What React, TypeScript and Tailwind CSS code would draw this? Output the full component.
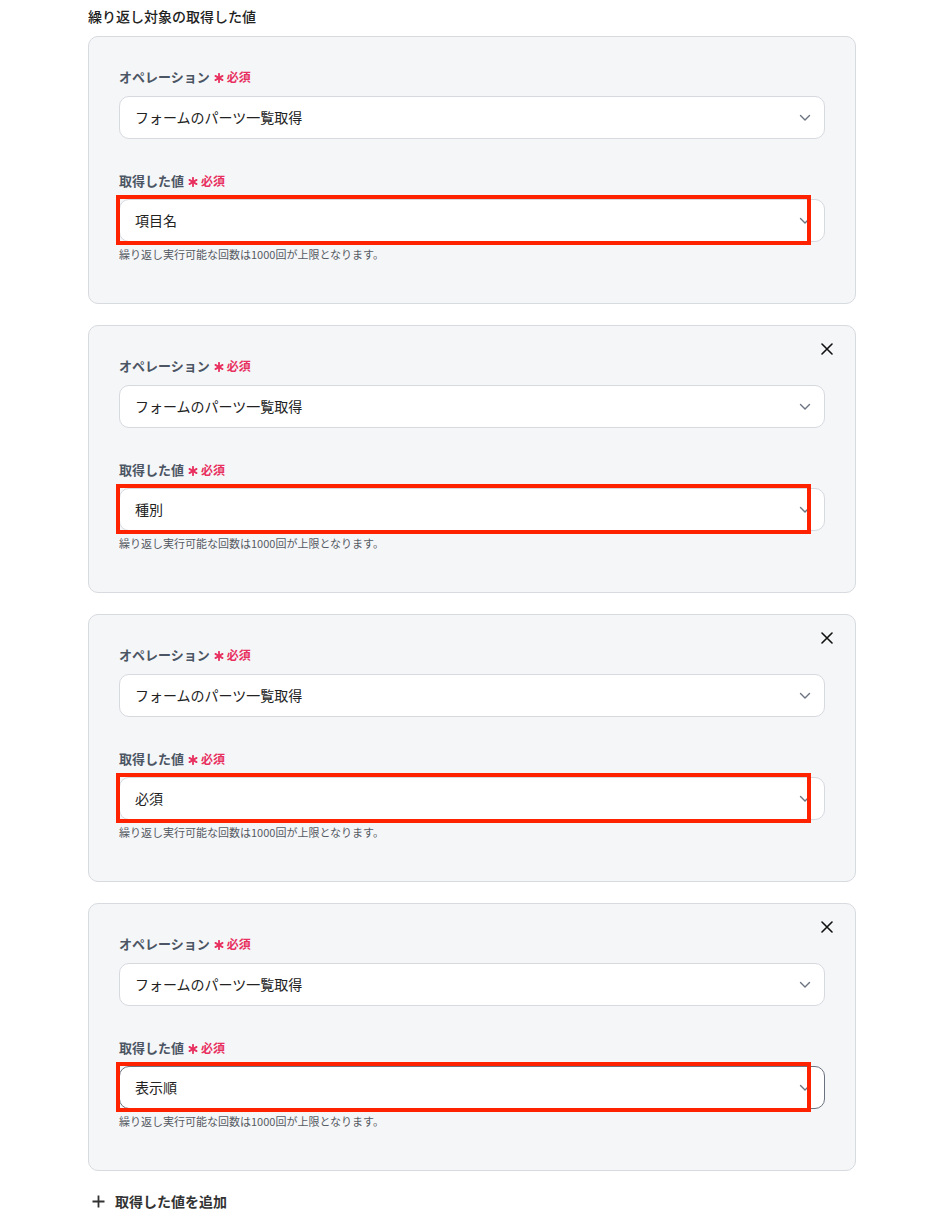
const font = { fontFamily: '"Noto Sans CJK JP", "Noto Sans", sans-serif' }

const items = [
  { value: '項目名', closable: false, focused: false },
  { value: '種別', closable: true, focused: false },
  { value: '必須', closable: true, focused: false },
  { value: '表示順', closable: true, focused: true },
]

function Required() {
  return (
    <span className="ml-[4px] inline-flex items-center text-[12px] font-bold text-[#e8305f]">
      <svg width="10" height="10" viewBox="0 0 10 10" className="mr-[3px] mt-[2px]">
        <g stroke="#e8305f" strokeWidth="1.8" strokeLinecap="round">
          <line x1="5" y1="0.8" x2="5" y2="9.2" />
          <line x1="1.4" y1="2.9" x2="8.6" y2="7.1" />
          <line x1="1.4" y1="7.1" x2="8.6" y2="2.9" />
        </g>
      </svg>
      必須
    </span>
  )
}

function Chevron() {
  return (
    <svg width="12" height="8" viewBox="0 0 12 8" className="absolute right-[13px] top-[17px]">
      <path d="M1.5 1.5 6 6l4.5-4.5" fill="none" stroke="#6b7280" strokeWidth="1.4" strokeLinecap="round" strokeLinejoin="round" />
    </svg>
  )
}

function Select({ value, focused, marked }: { value: string; focused?: boolean; marked?: boolean }) {
  return (
    <div
      className={`relative flex h-[43px] items-center rounded-[10px] border bg-white px-[15px] text-[14px] text-[#222] ${
        focused ? 'border-[#6b7280]' : 'border-[#d6d9de]'
      }`}
    >
      {value}
      <Chevron />
      {marked && (
        <div className="pointer-events-none absolute left-[-4px] top-[-5px] h-[50px] w-[695px] border-[4px] border-[#ff2200]" />
      )}
    </div>
  )
}

function Card({ value, closable, focused }: { value: string; closable: boolean; focused: boolean }) {
  return (
    <div className="relative rounded-[10px] border border-[#d7dade] bg-[#f5f6f8] px-[30px] pb-[40px] pt-[30px]">
      {closable && (
        <svg width="12" height="12" viewBox="0 0 12 12" className="absolute right-[22px] top-[17px]">
          <path d="M1 1l10 10M11 1 1 11" stroke="#111" strokeWidth="1.6" strokeLinecap="round" />
        </svg>
      )}
      <div className="flex h-[20px] items-center text-[13px] font-bold text-[#4b5563]">
        オペレーション
        <Required />
      </div>
      <div className="mt-[9px]">
        <Select value="フォームのパーツ一覧取得" />
      </div>
      <div className="mt-[32px] flex h-[20px] items-center text-[13px] font-bold text-[#4b5563]">
        取得した値
        <Required />
      </div>
      <div className="mt-[8px]">
        <Select value={value} focused={focused} marked />
      </div>
      <p className="mt-[4px] text-[11px] leading-[17px] text-[#555b63]">
        繰り返し実行可能な回数は1000回が上限となります。
      </p>
    </div>
  )
}

export default function App() {
  return (
    <main className="min-h-[1222px] bg-white pt-[6px]" style={font}>
      <div className="ml-[88px] w-[768px]">
        <h2 className="h-[20px] text-[14px] font-medium leading-[20px] text-[#222]">繰り返し対象の取得した値</h2>
        <div className="mt-[10px] flex flex-col gap-[21px]">
          {items.map((it) => (
            <Card key={it.value} value={it.value} closable={it.closable} focused={it.focused} />
          ))}
        </div>
        <button className="mt-[20px] flex items-center gap-[10px] pl-[4px] text-[14px] font-bold text-[#333]">
          <svg width="13" height="13" viewBox="0 0 13 13">
            <path d="M6.5 0.5v12M0.5 6.5h12" stroke="#333" strokeWidth="1.8" />
          </svg>
          取得した値を追加
        </button>
      </div>
    </main>
  )
}
